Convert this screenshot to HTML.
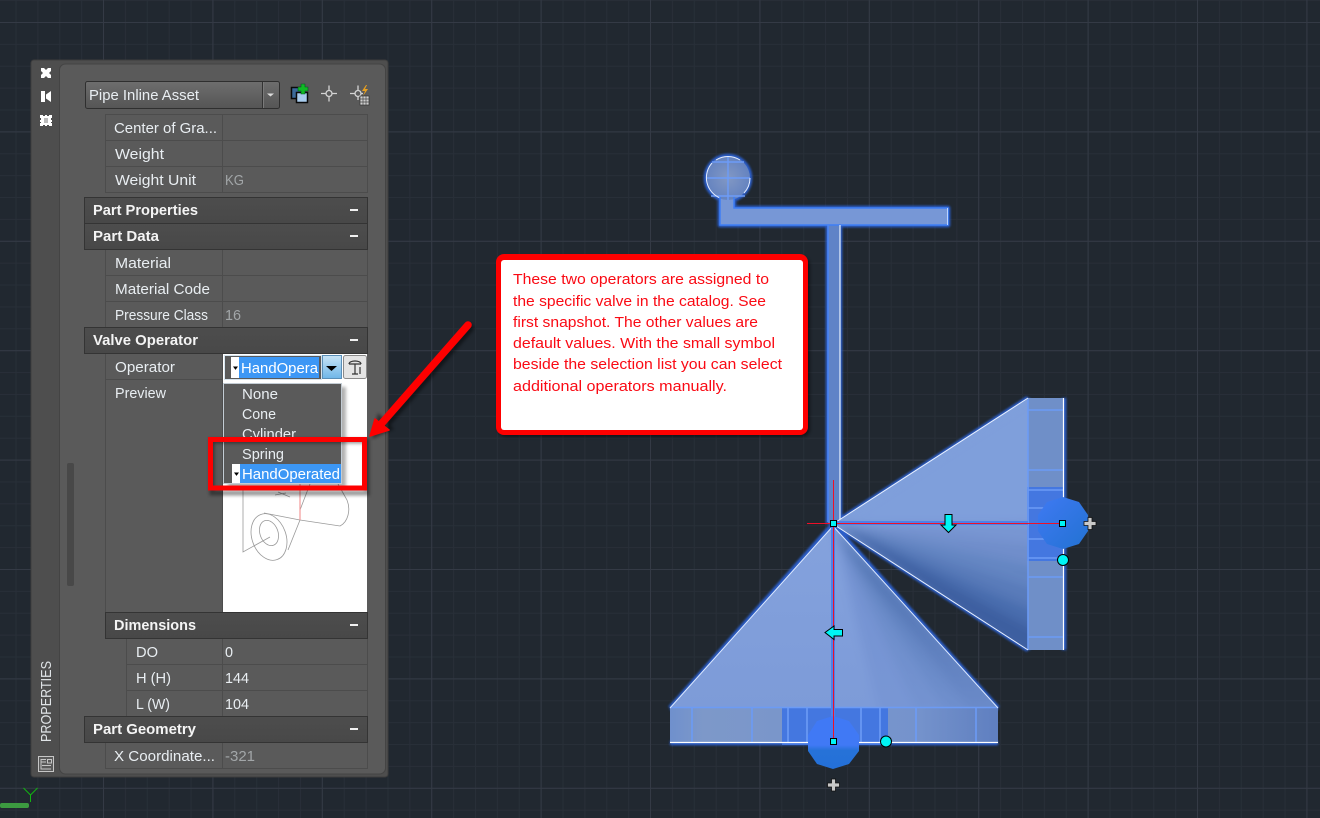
<!DOCTYPE html>
<html><head><meta charset="utf-8"><title>Properties</title>
<style>html,body{margin:0;padding:0;background:#212830;width:1320px;height:818px;overflow:hidden}svg{display:block}
.l{font:15px "Liberation Sans",sans-serif;fill:#e9eef2}
.h{font:bold 15px "Liberation Sans",sans-serif;fill:#f4f4f4}
.g{font:15px "Liberation Sans",sans-serif;fill:#a2a6a8}
.c{font:15px "Liberation Sans",sans-serif;fill:#fa0a14}
</style></head><body>
<svg xmlns="http://www.w3.org/2000/svg" width="1320" height="818" viewBox="0 0 1320 818">
<defs>
<pattern id="mn" patternUnits="userSpaceOnUse" x="15.5" y="0.1" width="21.88" height="21.88"><path d="M0.5 0V21.88M0 .5H21.88" stroke="#282f38" stroke-width="1" fill="none"/></pattern>
<pattern id="mj" patternUnits="userSpaceOnUse" x="103" y="22" width="109.4" height="109.4"><path d="M.5 0V109.4M0 .5H109.4" stroke="#343a45" stroke-width="1" fill="none"/></pattern>
<linearGradient id="hd" x1="0" y1="0" x2="0" y2="1"><stop offset="0" stop-color="#4d4d4d"/><stop offset="1" stop-color="#484848"/></linearGradient>
<linearGradient id="cb" x1="0" y1="0" x2="0" y2="1"><stop offset="0" stop-color="#6e6e6e"/><stop offset="1" stop-color="#555"/></linearGradient>
<linearGradient id="db" x1="0" y1="0" x2="0" y2="1"><stop offset="0" stop-color="#c8e4f6"/><stop offset="1" stop-color="#6fb6e8"/></linearGradient>
<linearGradient id="bf" x1="0" y1="0" x2="1" y2="0"><stop offset="0" stop-color="#6f90cd"/><stop offset=".1" stop-color="#7d98c9"/><stop offset=".75" stop-color="#7593cc"/><stop offset="1" stop-color="#5f7fc0"/></linearGradient>
<linearGradient id="fade" x1="0" y1="0" x2="0" y2="1"><stop offset="0" stop-color="#7a98d6" stop-opacity="0"/><stop offset="1" stop-color="#7a98d6" stop-opacity=".7"/></linearGradient>
<linearGradient id="oc" x1="0" y1="0" x2="1" y2="1"><stop offset="0" stop-color="#3f79f3"/><stop offset="1" stop-color="#2272d2"/></linearGradient>
<linearGradient id="oc2" x1="0" y1="0" x2="0" y2="1"><stop offset="0" stop-color="#4079f5"/><stop offset=".55" stop-color="#4079f5"/><stop offset=".65" stop-color="#2672d8"/><stop offset="1" stop-color="#2470d8"/></linearGradient>
<radialGradient id="bl" cx=".5" cy=".5" r=".6"><stop offset="0" stop-color="#8298c4"/><stop offset="1" stop-color="#5f7fbf"/></radialGradient>
<filter id="gl" x="-10%" y="-10%" width="120%" height="120%"><feGaussianBlur stdDeviation="1.1"/></filter>
<filter id="sh" x="-10%" y="-10%" width="120%" height="120%"><feGaussianBlur stdDeviation="1.6"/></filter>
<filter id="fb" x="-10%" y="-10%" width="120%" height="120%"><feGaussianBlur stdDeviation="5"/></filter>
<clipPath id="crc"><path d="M833 524L1028 398V650Z"/></clipPath>
<clipPath id="clc"><path d="M833 526L670 708H998Z"/></clipPath>
</defs>
<rect width="1320" height="818" fill="#212830"/>
<rect width="1320" height="818" fill="url(#mn)"/>
<rect width="1320" height="818" fill="url(#mj)"/>

<!-- drawing: glow -->
<g fill="none" stroke="#2f6cf0" stroke-width="4.500" filter="url(#gl)" opacity=".8" stroke-linejoin="round">
<path d="M1028 398L833 524L1028 650M1028 398V650M1064 398V650"/>
<path d="M670 708L833 524L998 708M670 708H998M670 743H998"/>
<path d="M828 225V524M840 225V524M720 195V225H948V208H734V195"/>
<circle cx="728" cy="178" r="22"/>
</g>
<!-- stem and handle -->
<rect x="828" y="225" width="12" height="299" fill="#5f83c7"/>
<path d="M720 195H734V208H948V225H720Z" fill="#7797d6"/>
<circle cx="728" cy="178" r="22" fill="url(#bl)"/>
<g fill="none" stroke="#6d9cf8" stroke-width="1.400">
<path d="M712 162H744M706 178H750M711 196H745M728 156V200"/>
</g>
<path d="M712 163A22 22 0 0 0 720 198M744 193A22 22 0 0 0 750 178M716 160A22 22 0 0 1 740 160" fill="none" stroke="#e4edff" stroke-width="1"/>
<path d="M720 197V225H948V208H734V197" fill="none" stroke="#3f7ff5" stroke-width="1.500"/>
<path d="M828 225V522" stroke="#4a85f5" stroke-width="1.600"/>
<path d="M840 225V520" stroke="#eaf2ff" stroke-width="1.200"/>
<path d="M947.500 208V225" stroke="#bcd3ff" stroke-width="1"/>
<!-- right cone fan -->
<g clip-path="url(#crc)">
<rect x="833" y="398" width="195" height="252" fill="#7f9fdb"/>
<g filter="url(#fb)">
<path d="M833 524L1040 390V523Z" fill="#7f9fdb"/>
<path d="M833 524L1040 523V545Z" fill="#7895d2"/>
<path d="M833 524L1040 545V567Z" fill="#6f8ecb"/>
<path d="M833 524L1040 567V590Z" fill="#6485c2"/>
<path d="M833 524L1040 590V612Z" fill="#587ab9"/>
<path d="M833 524L1040 612V632Z" fill="#4a6dae"/>
<path d="M833 524L1040 632V670Z" fill="#3e5fa0"/>
</g>
</g>
<rect x="1028" y="398" width="36" height="252" fill="#6f8fc8"/>
<rect x="1027" y="487" width="37" height="74" fill="#4477e0"/>
<g stroke="#6c9bf5" stroke-width="1.600" fill="none">
<path d="M1028 410H1064M1028 470H1064M1028 490H1064M1028 508H1064M1028 539H1064M1028 558H1064M1028 577H1064M1028 637H1064"/>
<path d="M1028 398V650"/>
</g>
<path d="M836 522L1028 398M836 526L1028 650" stroke="#e8f0ff" stroke-width="1" fill="none"/>
<path d="M1063.500 398V650" stroke="#fff" stroke-width="1.200"/>
<path d="M836 523H1028" stroke="#4f80e8" stroke-width="4"/>
<!-- lower cone fan -->
<g clip-path="url(#clc)">
<rect x="670" y="526" width="328" height="182" fill="#84a2dd"/>
<g filter="url(#fb)">
<path d="M833 526L650 720H880Z" fill="#84a2dd"/>
<path d="M833 526L880 720H920Z" fill="#7392d1"/>
<path d="M833 526L920 720H950Z" fill="#6687c5"/>
<path d="M833 526L950 720H975Z" fill="#577ab8"/>
<path d="M833 526L975 720H1020Z" fill="#466aa9"/>
</g>
<path d="M833 526L670 708H998Z" fill="url(#fade)"/>
</g>
<rect x="670" y="708" width="328" height="35" fill="url(#bf)"/>
<rect x="782" y="707" width="106" height="38" fill="#4477e0"/>
<g stroke="#6c9bf5" stroke-width="1.600" fill="none">
<path d="M692 708V743M752 708V743M788 708V743M807 708V743M861 708V743M880 708V743M916 708V743M976 708V743"/>
<path d="M670 707.500H998"/>
</g>
<path d="M833 526L670 708M833 526L998 708" stroke="#dbe8ff" stroke-width="1" fill="none"/>
<path d="M670 742.500H998" stroke="#fff" stroke-width="1.200"/>
<path d="M833 526V741" stroke="#4f80e8" stroke-width="4"/>
<!-- octagons -->
<polygon points="1063,497 1079,502 1088,515 1088,531 1079,544 1063,549 1047,544 1038,531 1038,515 1047,502" fill="url(#oc)"/>
<polygon points="833,716 849,721 859,735 859,751 849,764 833,769 817,764 808,751 808,735 817,721" fill="url(#oc2)"/>
<!-- crosshair -->
<path d="M807 523.500H1063M833.500 480V741" stroke="#ee1028" stroke-width="1" fill="none"/>
<!-- grips -->
<g fill="#00f5f5" stroke="#000" stroke-width="1">
<rect x="830.500" y="520.500" width="6" height="6"/>
<rect x="1059.500" y="520.500" width="6" height="6"/>
<rect x="830.500" y="738.500" width="6" height="6"/>
<circle cx="1063" cy="560" r="5.500"/>
<circle cx="886" cy="741.500" r="5.500"/>
<path d="M945 514.500H952V525H956L948.500 532.500L941 525H945Z"/>
<path d="M825 632.500L834 626V629.500H842.500V636H834V639.500Z"/>
</g>
<g fill="#c9c9c9" stroke="#111" stroke-width=".8">
<path d="M1088 517.500H1092V521.500H1096V525.500H1092V529.500H1088V525.500H1084V521.500H1088Z"/>
<path d="M831.500 779H835.500V783H839.500V787H835.500V791H831.500V787H827.500V783H831.500Z"/>
</g>
<!-- UCS -->
<rect x="0" y="803" width="29" height="5" rx="2" fill="#3c9a40"/>
<path d="M23.500 788L30.500 795L37.500 788M30.500 795V802" stroke="#12b212" stroke-width="1" fill="none"/>

<!-- panel -->
<rect x="31" y="60" width="357" height="717" rx="3" fill="#4e4e4e" stroke="#3d3d3d"/>
<rect x="59.500" y="64" width="326" height="710" rx="6" fill="#5a5a5a" stroke="#444"/>
<!-- left strip icons -->
<g fill="#fff">
<path d="M41 68H44L46 70L48 68H51V71L49 73L51 75V78H48L46 76L44 78H41V75L43 73L41 71Z"/>
<path d="M41 91H45V102H41ZM51 91V102L46 98.500V94.500Z"/>
<path d="M40 115H43V116H45V115H47V116H49V115H52V118H51V120H52V122H51V123H52V126H49V125H47V126H45V125H43V126H40V123H41V122H40V120H41V118H40ZM44 118V123H48V118Z"/>
<rect x="44" y="118" width="4" height="5" fill="#bbb"/>
</g>
<text transform="translate(51,742) rotate(-90)" font-family="Liberation Sans,sans-serif" font-size="15" fill="#dfe3e6" textLength="81" lengthAdjust="spacingAndGlyphs">PROPERTIES</text>
<rect x="38.500" y="756.500" width="15" height="15" fill="#5a5a5a" stroke="#c6c6c6"/>
<path d="M41 759.500H46M41 762H46M41 759V769H51M47.500 759.500H51.500V763H47.500ZM42 765.500H51" stroke="#c6c6c6" fill="none"/>
<!-- scrollbar -->
<rect x="67" y="463" width="7" height="123" rx="2" fill="#484848"/>
<!-- combo -->
<rect x="85.500" y="81.500" width="194" height="27" rx="2" fill="url(#cb)" stroke="#2f2f2f"/>
<path d="M262.500 82V108" stroke="#333"/><path d="M263.500 82V108" stroke="#7a7a7a"/>
<path d="M267 93.500H274L270.500 96.500Z" fill="#ddd"/>
<text x="89" y="100" class="l" textLength="110" lengthAdjust="spacingAndGlyphs">Pipe Inline Asset</text>
<!-- toolbar icons -->
<rect x="291.500" y="87.500" width="11" height="11" fill="#3b6a9a" stroke="#0a0a0a" stroke-width="1.500"/>
<rect x="296.500" y="92.500" width="11" height="10" fill="#a9cdee" stroke="#0a0a0a" stroke-width="1.500"/>
<path d="M301 84H305V87H308V91H305V94H301V91H298V87H301Z" fill="#10b824" stroke="#052" stroke-width=".6"/>
<g fill="none" stroke="#d4d4d4" stroke-width="1.300">
<circle cx="329" cy="93.500" r="3"/><path d="M321 93.500H326M332 93.500H337M329 85.500V90.500M329 96.500V101.500"/>
<circle cx="358" cy="93.500" r="3"/><path d="M350 93.500H355M361 93.500H363M358 85.500V90.500M358 96.500V100"/>
</g>
<path d="M366 85L362 91H365L363 96L368 89H365L367 85Z" fill="#e8a020"/>
<rect x="360" y="96" width="9" height="9" fill="#cfcfcf" stroke="#333" stroke-width=".7"/>
<path d="M363 96V105M366 96V105M360 99H369M360 102H369" stroke="#444" stroke-width=".7"/>

<!-- grid rows -->
<g fill="none" stroke="#4c4c4c" stroke-width="1">
<path d="M105.500 114.500H367.500V192.500H105.500ZM222.500 114V192M105 140.500H367M105 166.500H367"/>
<path d="M105.500 249V327M367.500 249V327M222.500 249V327M105 275.500H367M105 301.500H367"/>
<path d="M105.500 353V612M222.500 353V612M105 379.500H223"/>
<path d="M126.500 638V716M367.500 638V716M222.500 638V716M126 664.500H367M126 690.500H367"/>
<path d="M105.500 742V769M367.500 742V769M222.500 742V769M105 768.500H367"/>
</g>
<!-- headers -->
<g fill="url(#hd)" stroke="#343434">
<rect x="84.500" y="197.500" width="283" height="26"/>
<rect x="84.500" y="223.500" width="283" height="26"/>
<rect x="84.500" y="327.500" width="283" height="26"/>
<rect x="105.500" y="612.500" width="262" height="26"/>
<rect x="84.500" y="716.500" width="283" height="26"/>
</g>
<g fill="#f0f0f0">
<rect x="350" y="209" width="8" height="2"/><rect x="350" y="235" width="8" height="2"/>
<rect x="350" y="339" width="8" height="2"/><rect x="350" y="624" width="8" height="2"/><rect x="350" y="728" width="8" height="2"/>
</g>
<!-- labels -->
<text x="114" y="133" class="l" textLength="103" lengthAdjust="spacingAndGlyphs">Center of Gra...</text>
<text x="115" y="159" class="l" textLength="49" lengthAdjust="spacingAndGlyphs">Weight</text>
<text x="115" y="185" class="l" textLength="81" lengthAdjust="spacingAndGlyphs">Weight Unit</text>
<text x="225" y="185" class="g" textLength="19" lengthAdjust="spacingAndGlyphs">KG</text>
<text x="93" y="215" class="h" textLength="105" lengthAdjust="spacingAndGlyphs">Part Properties</text>
<text x="93" y="241" class="h" textLength="66" lengthAdjust="spacingAndGlyphs">Part Data</text>
<text x="115" y="268" class="l" textLength="56" lengthAdjust="spacingAndGlyphs">Material</text>
<text x="115" y="294" class="l" textLength="95" lengthAdjust="spacingAndGlyphs">Material Code</text>
<text x="115" y="320" class="l" textLength="93" lengthAdjust="spacingAndGlyphs">Pressure Class</text>
<text x="225" y="320" class="g" textLength="16" lengthAdjust="spacingAndGlyphs">16</text>
<text x="93" y="345" class="h" textLength="105" lengthAdjust="spacingAndGlyphs">Valve Operator</text>
<text x="115" y="372" class="l" textLength="60" lengthAdjust="spacingAndGlyphs">Operator</text>
<text x="115" y="398" class="l" textLength="51" lengthAdjust="spacingAndGlyphs">Preview</text>
<text x="114" y="630" class="h" textLength="82" lengthAdjust="spacingAndGlyphs">Dimensions</text>
<text x="136" y="657" class="l" textLength="22" lengthAdjust="spacingAndGlyphs">DO</text>
<text x="225" y="657" class="l" textLength="8" lengthAdjust="spacingAndGlyphs">0</text>
<text x="136" y="683" class="l" textLength="35" lengthAdjust="spacingAndGlyphs">H (H)</text>
<text x="225" y="683" class="l" textLength="24" lengthAdjust="spacingAndGlyphs">144</text>
<text x="136" y="709" class="l" textLength="34" lengthAdjust="spacingAndGlyphs">L (W)</text>
<text x="225" y="709" class="l" textLength="24" lengthAdjust="spacingAndGlyphs">104</text>
<text x="93" y="734" class="h" textLength="103" lengthAdjust="spacingAndGlyphs">Part Geometry</text>
<text x="114" y="761" class="l" textLength="101" lengthAdjust="spacingAndGlyphs">X Coordinate...</text>
<text x="225" y="761" class="g" textLength="30" lengthAdjust="spacingAndGlyphs">-321</text>

<!-- operator control -->
<rect x="223" y="354" width="144" height="26" fill="#fff"/>
<rect x="224.500" y="355.500" width="97" height="24" fill="#5a5a5a" stroke="#d6e4ee"/>
<rect x="231" y="357" width="8" height="21" fill="#fff"/>
<path d="M234 367H237L235.500 369Z" fill="#000" stroke="#000"/>
<rect x="239" y="357" width="80" height="21" fill="#3c97f5"/>
<text x="241" y="373" font-family="Liberation Sans,sans-serif" font-size="15" fill="#fff" textLength="77" lengthAdjust="spacingAndGlyphs">HandOpera</text>
<rect x="322.500" y="355.500" width="19" height="23" fill="url(#db)" stroke="#5a8fb8"/>
<path d="M326 366H337L331.500 371Z" fill="#000"/>
<rect x="343.500" y="355.500" width="23" height="23" rx="2" fill="#e4e4e4" stroke="#8a8a8a"/>
<path d="M349 364C349 360 361 360 361 364M349 364H361M355 364V374M352 374H358M360 367V374" stroke="#333" stroke-width="1.200" fill="none"/>
<!-- preview -->
<rect x="223" y="380" width="144" height="232" fill="#fff"/>
<g fill="none" stroke="#9a9a9a" stroke-width=".8">
<ellipse cx="269" cy="537" rx="17" ry="24" transform="rotate(-20 269 537)"/>
<ellipse cx="269" cy="533" rx="9" ry="13" transform="rotate(-20 269 533)"/>
<path d="M243 490V552L270 537M264 513L300 520L340 526C348 522 351 510 347 500L338 484"/>
<path d="M300 520L288 550M300 510L310 484M278 492L290 497M275 495L286 493"/>
</g>
<path d="M300 484V520" stroke="#f29a9a" stroke-width="1.200"/>
<!-- dropdown -->
<rect x="228" y="387" width="118" height="101" fill="#000" opacity=".3" filter="url(#sh)"/>
<rect x="223.500" y="383.500" width="118" height="100" fill="#5a5a5a" stroke="#c3ccd4"/>
<text x="242" y="399" class="l" textLength="36" lengthAdjust="spacingAndGlyphs">None</text>
<text x="242" y="419" class="l" textLength="34" lengthAdjust="spacingAndGlyphs">Cone</text>
<text x="242" y="439" class="l" textLength="54" lengthAdjust="spacingAndGlyphs">Cylinder</text>
<text x="242" y="459" class="l" textLength="42" lengthAdjust="spacingAndGlyphs">Spring</text>
<rect x="232" y="464" width="8" height="19" fill="#fff"/>
<path d="M235 473H238L236.500 475Z" fill="#000" stroke="#000"/>
<rect x="240" y="464" width="101" height="19" fill="#3c97f5"/>
<text x="242" y="479" font-family="Liberation Sans,sans-serif" font-size="15" fill="#fff" textLength="98" lengthAdjust="spacingAndGlyphs">HandOperated</text>

<!-- red box -->
<rect x="212" y="441" width="155" height="52" fill="none" stroke="#000" stroke-width="5" opacity=".4" filter="url(#sh)"/>
<rect x="210.500" y="439.500" width="154" height="48.500" fill="none" stroke="#fe0000" stroke-width="5"/>
<!-- red arrow -->
<g opacity=".45" filter="url(#sh)" transform="translate(2,3)"><path d="M468 325L384 421" stroke="#000" stroke-width="8" stroke-linecap="round"/><path d="M370 436L376 410L392 426Z" fill="#000"/></g>
<path d="M468 325L382 423" stroke="#fe0000" stroke-width="7.500" stroke-linecap="round"/>
<path d="M370 436L375 419L389 430Z" fill="#fe0000" stroke="#fe0000" stroke-width="1.500" stroke-linejoin="round"/>
<!-- callout -->
<rect x="498" y="257" width="312" height="180" rx="8" fill="#000" opacity=".45" filter="url(#sh)"/>
<rect x="496" y="254" width="312" height="181" rx="8" fill="#fe0000"/>
<rect x="501" y="260" width="302" height="170" rx="3" fill="#fff"/>
<text x="513" y="284" class="c" textLength="256" lengthAdjust="spacingAndGlyphs">These two operators are assigned to</text>
<text x="513" y="306" class="c" textLength="253" lengthAdjust="spacingAndGlyphs">the specific valve in the catalog. See</text>
<text x="513" y="327" class="c" textLength="245" lengthAdjust="spacingAndGlyphs">first snapshot. The other values are</text>
<text x="513" y="348" class="c" textLength="262" lengthAdjust="spacingAndGlyphs">default values. With the small symbol</text>
<text x="513" y="369" class="c" textLength="269" lengthAdjust="spacingAndGlyphs">beside the selection list you can select</text>
<text x="513" y="391" class="c" textLength="214" lengthAdjust="spacingAndGlyphs">additional operators manually.</text>
</svg>
</body></html>
